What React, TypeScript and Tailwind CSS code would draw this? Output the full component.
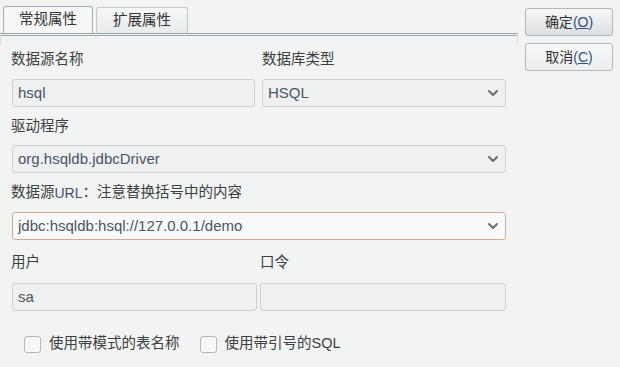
import React from 'react';

const font = { fontFamily: '"Liberation Sans", "Noto Sans CJK SC", sans-serif' };

const Chevron = () => (
  <svg width="12" height="8" viewBox="0 0 12 8" aria-hidden="true">
    <path d="M2 2l4 4 4-4" fill="none" stroke="#6b6f73" strokeWidth="2" strokeLinecap="round" strokeLinejoin="round" />
  </svg>
);

const Field = ({ value, select, focus, className }: { value: string; select?: boolean; focus?: boolean; className?: string }) => (
  <div
    className={`flex h-[28px] items-center justify-between rounded-[3px] border pl-[5px] pr-[6px] text-[15px] text-[#4a5563] ${
      focus ? 'border-[#d3ab94] bg-[#f8f9f9]' : 'border-[#cdd1d3] bg-[#eff0f0]'
    } ${className ?? ''}`}
  >
    <span>{value}</span>
    {select && <Chevron />}
  </div>
);

const Label = ({ children, className }: { children: React.ReactNode; className?: string }) => (
  <div className={`flex h-[20px] items-center ${className ?? ''}`}>{children}</div>
);

const Check = ({ label }: { label: string }) => (
  <label className="flex h-[20px] items-center gap-[8px]">
    <span className="h-[17px] w-[17px] rounded-[3px] border border-[#b3b9bd] bg-[#f6f7f7]" />
    <span>{label}</span>
  </label>
);

export default function App() {
  return (
    <div className="flex h-[367px] w-[620px] bg-[#f2f3f3] text-[14.5px] text-[#3c3f42]" style={font}>
      <div className="w-[519px] pt-[6px]">
        {/* tabs */}
        <div className="flex items-end pl-[3px]">
          <div className="flex h-[27px] w-[90px] items-center justify-center rounded-t-[3px] border border-b-0 border-[#a7aeb3] bg-[#f5f6f6] text-[#333]">
            常规属性
          </div>
          <div className="ml-[3px] flex h-[26px] w-[92px] items-center justify-center rounded-t-[3px] border border-b-0 border-[#c3c8cb] bg-gradient-to-b from-[#f6f7f7] to-[#e8eaeb] text-[#333]">
            扩展属性
          </div>
        </div>
        <div className="mr-[1px] h-[12px] border-x border-t-[3px] border-double border-x-[#d9dcde] border-t-[#9ea6ab]" />

        <div className="pl-[12px] pr-[13px]">
          <div className="mt-[5px] grid grid-cols-[243px_244px] gap-x-[7px]">
            <Label className="-ml-[1px]">数据源名称</Label>
            <Label>数据库类型</Label>
          </div>
          <div className="mt-[9px] grid grid-cols-[243px_244px] gap-x-[7px]">
            <Field value="hsql" />
            <Field value="HSQL" select />
          </div>

          <Label className="mt-[10px] -ml-[1px]">驱动程序</Label>
          <Field value="org.hsqldb.jdbcDriver" select className="mt-[8px]" />

          <Label className="mt-[10px] -ml-[1px]">
            数据源<span className="text-[14px] text-[#44506a]">URL</span>：注意替换括号中的内容
          </Label>
          <Field value="jdbc:hsqldb:hsql://127.0.0.1/demo" select focus className="mt-[9px]" />

          <div className="mt-[13px] grid grid-cols-[245px_246px] gap-x-[3px]">
            <Label className="-ml-[1px]">用户</Label>
            <Label>口令</Label>
          </div>
          <div className="mt-[10px] grid grid-cols-[245px_246px] gap-x-[3px]">
            <Field value="sa" />
            <Field value="" />
          </div>

          <div className="mt-[23px] flex gap-[20px] pl-[12px]">
            <Check label="使用带模式的表名称" />
            <Check label="使用带引号的SQL" />
          </div>
        </div>
      </div>

      {/* buttons */}
      <div className="ml-[6px] flex flex-col gap-[7px] pt-[8px]">
        <button className="h-[28px] w-[88px] rounded-[3px] border border-[#b1b8bc] bg-gradient-to-b from-[#f7f8f8] to-[#dcdfe1] text-[14px] text-[#333]">
          确定<span className="text-[#2f4f7f]">(<span className="underline">O</span>)</span>
        </button>
        <button className="h-[28px] w-[88px] rounded-[3px] border border-[#b1b8bc] bg-gradient-to-b from-[#f7f8f8] to-[#eceeef] text-[14px] text-[#333]">
          取消<span className="text-[#2f4f7f]">(<span className="underline">C</span>)</span>
        </button>
      </div>
    </div>
  );
}
